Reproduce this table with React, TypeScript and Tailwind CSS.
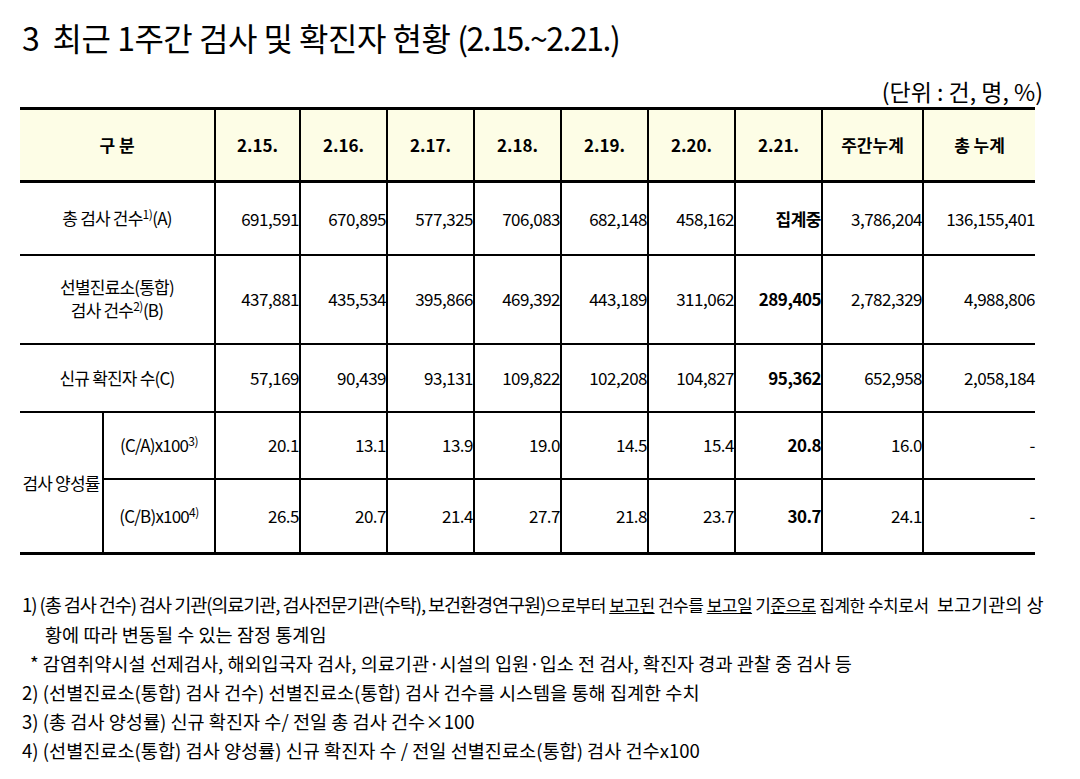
import React from "react";

const font = { fontFamily: '"Noto Sans CJK KR", "Noto Sans", sans-serif' };

type Row = {
    label: React.ReactNode;
    values: string[];
    h: string;
};

const dates = ["2.15.", "2.16.", "2.17.", "2.18.", "2.19.", "2.20.", "2.21."];

const Sup = ({ n }: { n: string }) => (
    <span className="text-[12px] relative -top-[6px] tracking-[-0.5px]">{n}</span>
);

const rows: Row[] = [
    {
        label: <>총 검사 건수<Sup n="1)" />(A)</>,
        values: ["691,591", "670,895", "577,325", "706,083", "682,148", "458,162", "집계중", "3,786,204", "136,155,401"],
        h: "h-[73px]",
    },
    {
        label: <>선별진료소(통합)<br />검사 건수<Sup n="2)" />(B)</>,
        values: ["437,881", "435,534", "395,866", "469,392", "443,189", "311,062", "289,405", "2,782,329", "4,988,806"],
        h: "h-[89px]",
    },
    {
        label: <>신규 확진자 수(C)</>,
        values: ["57,169", "90,439", "93,131", "109,822", "102,208", "104,827", "95,362", "652,958", "2,058,184"],
        h: "h-[68px]",
    },
];

const rates = [
    {
        label: <>(C/A)x100<Sup n="3)" /></>,
        values: ["20.1", "13.1", "13.9", "19.0", "14.5", "15.4", "20.8", "16.0", "-"],
        h: "h-[67px]",
    },
    {
        label: <>(C/B)x100<Sup n="4)" /></>,
        values: ["26.5", "20.7", "21.4", "27.7", "21.8", "23.7", "30.7", "24.1", "-"],
        h: "h-[75px]",
    },
];

const numCell = "border-2 border-black text-right align-middle pr-0 pl-1 text-[17px] tracking-[-0.5px]";

const Values = ({ values }: { values: string[] }) => (
    <>
        {values.map((v, i) => (
            <td
                key={i}
                className={`${numCell} ${i === 6 ? "font-bold" : ""} ${i === 8 ? "border-r-0" : ""}`}
            >
                {v}
            </td>
        ))}
    </>
);

export default function App() {
    return (
        <div className="w-[1080px] h-[779px] bg-white text-black overflow-hidden" style={font}>
            <h1 className="pl-[22px] pt-[13px] text-[32px] leading-[48px] font-normal tracking-[-0.5px]">
                3&nbsp;&nbsp;최근 1주간 검사 및 확진자 현황 <span className="tracking-[-1.5px]">(2.15.~2.21.)</span>
            </h1>
            <div className="flex justify-end pr-[37px] pt-[15px] text-[23px] leading-[30px] tracking-[0px] whitespace-pre">
                (단위 : 건, 명, %)
            </div>

            <table className="ml-[20px] mt-[1px] border-collapse table-fixed w-[1015px] border-t-[3px] border-b-[3px] border-black">
                <colgroup>
                    <col className="w-[83px]" />
                    <col className="w-[112px]" />
                    <col className="w-[85px]" />
                    <col className="w-[87px]" />
                    <col className="w-[87px]" />
                    <col className="w-[87px]" />
                    <col className="w-[87px]" />
                    <col className="w-[87px]" />
                    <col className="w-[87px]" />
                    <col className="w-[101px]" />
                    <col className="w-[112px]" />
                </colgroup>
                <thead>
                    <tr className="h-[73px] bg-[#fdfde6] border-b-[3px] border-black">
                        <th colSpan={2} className="border-2 border-l-0 border-black text-[17px] font-bold">구 분</th>
                        {dates.map((d) => (
                            <th key={d} className="border-2 border-black text-[17px] font-bold">{d}</th>
                        ))}
                        <th className="border-2 border-black text-[17px] font-bold">주간누계</th>
                        <th className="border-2 border-r-0 border-black text-[17px] font-bold">총 누계</th>
                    </tr>
                </thead>
                <tbody>
                    {rows.map((r, i) => (
                        <tr key={i} className={r.h}>
                            <td colSpan={2} className="border-2 border-l-0 border-black text-center text-[17px] leading-[23px] tracking-[-0.8px]">
                                {r.label}
                            </td>
                            <Values values={r.values} />
                        </tr>
                    ))}
                    {rates.map((r, i) => (
                        <tr key={i} className={r.h}>
                            {i === 0 && (
                                <td rowSpan={2} className="border-2 border-l-0 border-black text-center text-[17px] tracking-[-0.8px] whitespace-nowrap">
                                    검사 양성률
                                </td>
                            )}
                            <td className="border-2 border-black text-center text-[17px] tracking-[-0.8px]">{r.label}</td>
                            <Values values={r.values} />
                        </tr>
                    ))}
                </tbody>
            </table>

            <div className="pl-[22px] pt-[34px] text-[18.6px] leading-[29px] whitespace-nowrap tracking-[0px]">
                <p className="whitespace-pre">
                    <span className="tracking-[-1.1px]">1) (총 검사 건수) 검사 기관(의료기관, 검사전문기관(수탁), 보건환경연구원)</span>
                    <span className="text-[17px] tracking-[-0.5px]">
                        으로부터 <span className="underline">보고된</span> 건수를 <span className="underline">보고일</span> 기<span className="underline">준으로</span> 집계한 수치로서
                    </span>
                    <span className="tracking-[0px]">{"  "}보고기관의 상</span>
                </p>
                <p className="pl-[23px]">황에 따라 변동될 수 있는 잠정 통계임</p>
                <p className="pl-[8px]">* 감염취약시설 선제검사, 해외입국자 검사, 의료기관·시설의 입원·입소 전 검사, 확진자 경과 관찰 중 검사 등</p>
                <p>2) (선별진료소(통합) 검사 건수) 선별진료소(통합) 검사 건수를 시스템을 통해 집계한 수치</p>
                <p>3) (총 검사 양성률) 신규 확진자 수/ 전일 총 검사 건수×100</p>
                <p>4) (선별진료소(통합) 검사 양성률) 신규 확진자 수 / 전일 선별진료소(통합) 검사 건수x100</p>
            </div>
        </div>
    );
}
